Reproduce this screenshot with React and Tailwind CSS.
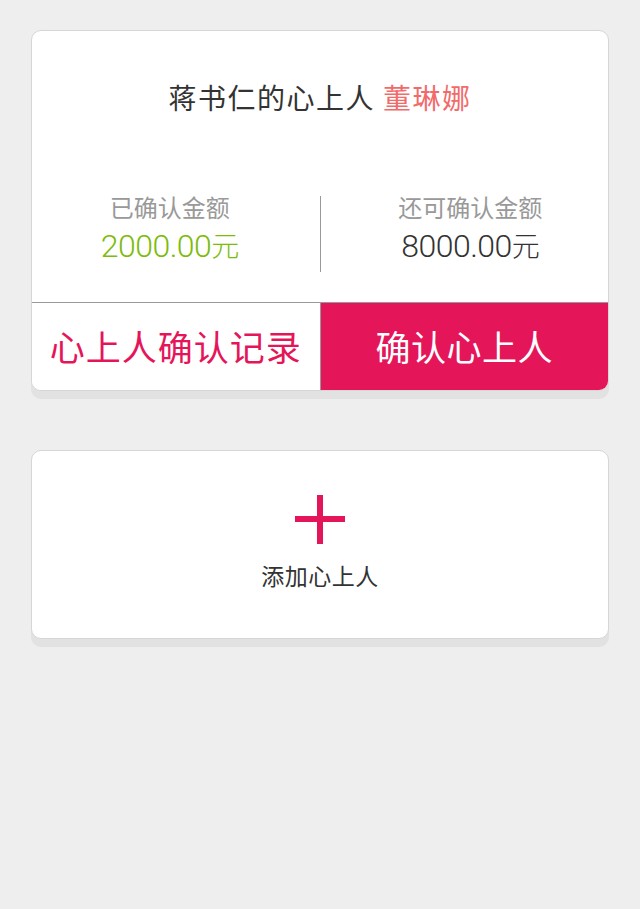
import React from "react";

const cjk = "font-['Noto_Sans_CJK_SC','Noto_Sans',sans-serif]";

export default function App() {
  return (
    <div className={`min-h-screen bg-[#eeeeee] px-[31px] pt-[30px] ${cjk}`}>
      {/* Sweetheart card */}
      <div className="rounded-[10px] border border-[#d6d6d6] bg-white shadow-[0_8px_0_#e2e2e2] overflow-hidden">
        <div className="h-[132px] flex items-center justify-center text-[28px] tracking-[1.5px] text-[#333333]">
          <span>蒋书仁的心上人</span>
          <span className="ml-[8px] text-[#f26b6b]">董琳娜</span>
        </div>

        <div className="h-[139px] flex items-center">
          <div className="flex-1 flex flex-col items-center pr-[12px] pb-[6px]">
            <p className="text-[24px] leading-[32px] text-[#999999]">已确认金额</p>
            <p className="text-[32px] leading-[44px] text-[#7dbb0c] font-['Roboto',sans-serif] font-light tracking-[-0.5px]">
              2000.00<span className={`${cjk} text-[28px]`}>元</span>
            </p>
          </div>
          <div className="w-px h-[76px] mt-[3px] bg-[#999999]"></div>
          <div className="flex-1 flex flex-col items-center pl-[12px] pb-[6px]">
            <p className="text-[24px] leading-[32px] text-[#999999]">还可确认金额</p>
            <p className="text-[32px] leading-[44px] text-[#333333] font-['Roboto',sans-serif] font-light tracking-[-0.5px]">
              8000.00<span className={`${cjk} text-[28px]`}>元</span>
            </p>
          </div>
        </div>

        <div className="flex h-[88px] border-t border-[#999999]">
          <button className="flex-1 flex items-center justify-center bg-white text-[35px] tracking-[1px] text-[#e5155a] border-r border-[#999999]">
            心上人确认记录
          </button>
          <button className="flex-1 flex items-center justify-center bg-[#e5155a] text-[35px] tracking-[0.5px] text-white">
            确认心上人
          </button>
        </div>
      </div>

      {/* Add card */}
      <div className="mt-[59px] h-[189px] rounded-[10px] border border-[#d6d6d6] bg-white shadow-[0_8px_0_#e2e2e2] flex flex-col items-center">
        <svg width="50" height="49" viewBox="0 0 50 49" className="mt-[44px]">
          <rect x="22" y="0" width="6" height="49" fill="#e5155a" />
          <rect x="0" y="21" width="50" height="6" fill="#e5155a" />
        </svg>
        <p className="mt-[15px] text-[23px] leading-[32px] tracking-[0.5px] text-[#333333]">添加心上人</p>
      </div>
    </div>
  );
}
